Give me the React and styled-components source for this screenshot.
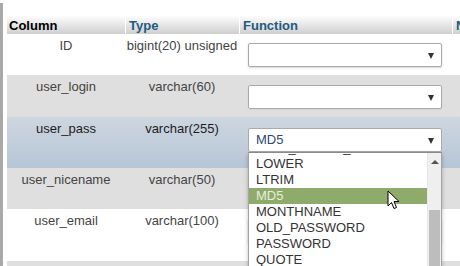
import React from "react";
import styled, { createGlobalStyle, css } from "styled-components";

/* ── page ─────────────────────────────────────────────────────────────────── */

const GlobalStyle = createGlobalStyle`
  html, body {
    margin: 0;
    padding: 0;
    background: #fff;
    font-family: "Liberation Sans", Arial, sans-serif;
    font-size: 13px;
    color: #444;
    overflow: hidden;
  }
`;

const Page = styled.div`
  position: relative;
  display: flex;
  width: 460px;
  height: 266px;
  overflow: hidden;
`;

const NavEdge = styled.div`
  width: 3px;
  flex: none;
  background: #a9a9a9;
  margin-top: 3px;
`;

const Content = styled.div`
  flex: 1;
  display: flex;
  flex-direction: column;
  padding-left: 4px;
  min-width: 0;
`;

const TopStrip = styled.div`
  display: flex;
  height: 3px;
  margin-left: -7px;
  background: #f1f1f1;
`;

const StripPart = styled.div`
  width: ${({ w }) => w}px;
  flex: none;
  border-right: 1px solid #c9c9c9;
`;

/* ── table ────────────────────────────────────────────────────────────────── */

const Table = styled.div`
  margin-top: 16px;
  display: flex;
  flex-direction: column;
`;

const grid = css`
  display: grid;
  grid-template-columns: 118px 114px 213px 1fr;
`;

const HeadRow = styled.div`
  ${grid};
  height: 18px;
  background: linear-gradient(#fdfdfd, #cfcfcf);
`;

const HeadCell = styled.div`
  padding-left: ${({ first }) => (first ? 2 : 3)}px;
  border-left: ${({ first }) => (first ? "none" : "1px solid #fff")};
  font-weight: bold;
  line-height: 19px;
  white-space: nowrap;
  overflow: hidden;
  color: ${({ link }) => (link ? "#235a81" : "#000")};
`;

const rowBg = {
  odd: "#fff",
  even: "#dfdfdf",
  hover: "linear-gradient(#ced6df, #b6c6d7)",
};

const Row = styled.div`
  ${grid};
  height: ${({ h }) => h}px;
  background: ${({ kind }) => rowBg[kind]};
  color: ${({ kind }) => (kind === "hover" ? "#1c1c1c" : "#444")};
`;

const Cell = styled.div`
  text-align: center;
  padding-top: 4px;
  line-height: 15px;
  white-space: nowrap;
`;

const FuncCell = styled.div`
  position: relative;
  padding: ${({ top }) => top}px 10px 0 9px;
`;

const SelectBox = styled.div`
  position: relative;
  height: 22px;
  border: 1px solid #aaa;
  border-radius: 2px;
  background: #fff;
  box-shadow: 0 1px 2px #d4d4d4;
  padding-left: 7px;
  line-height: 22px;
  color: #2e4a73;

  &::after {
    content: "";
    position: absolute;
    right: 7px;
    top: 9px;
    border-left: 3.5px solid transparent;
    border-right: 3.5px solid transparent;
    border-top: 6px solid #333;
  }
`;

/* ── open dropdown list ───────────────────────────────────────────────────── */

const ListPopup = styled.div`
  position: absolute;
  z-index: 5;
  top: 23px;
  left: -1px;
  width: 192px;
  height: 130px;
  border: 1px solid #a3a3a3;
  border-top-color: #8a8a8a;
  background: #fff;
  box-shadow: 0 2px 4px rgba(0, 0, 0, 0.25);
  display: flex;
  overflow: hidden;
`;

const Options = styled.div`
  flex: 1;
  overflow: hidden;
`;

const OptionsInner = styled.div`
  margin-top: -13px;
`;

const Option = styled.div`
  height: 16px;
  line-height: 16px;
  padding-left: 7px;
  color: #333;
  white-space: nowrap;
  ${({ active }) =>
    active &&
    css`
      background: #8fab6b;
      color: #e6eedc;
    `}
`;

const Scrollbar = styled.div`
  width: 13px;
  flex: none;
  display: flex;
  flex-direction: column;
  background: #efefef;
  border-left: 1px solid #e6e6e6;
`;

const ScrollArrow = styled.div`
  height: 12px;
  margin-top: 3px;
  display: flex;
  justify-content: center;
  align-items: center;

  &::before {
    content: "";
    border-left: 4px solid transparent;
    border-right: 4px solid transparent;
    border-bottom: 4px solid #555;
  }
`;

const Thumb = styled.div`
  margin: 42px 1px 0 1px;
  flex: 1;
  background: #bdbdbd;
`;

const Cursor = styled.svg`
  position: absolute;
  z-index: 10;
  left: 387px;
  top: 190px;
`;

const stripParts = [93, 33, 138, 89, 78];

const options = [
  "LAST_INSERT_ID",
  "LOWER",
  "LTRIM",
  "MD5",
  "MONTHNAME",
  "OLD_PASSWORD",
  "PASSWORD",
  "QUOTE",
  "RAND",
];

const rows = [
  { name: "ID", type: "bigint(20) unsigned", kind: "odd", h: 41, top: 9 },
  { name: "user_login", type: "varchar(60)", kind: "even", h: 42, top: 10 },
  { name: "user_pass", type: "varchar(255)", kind: "hover", h: 51, top: 11, value: "MD5", open: true },
  { name: "user_nicename", type: "varchar(50)", kind: "even", h: 41, top: 10 },
  { name: "user_email", type: "varchar(100)", kind: "odd", h: 52, top: 10 },
  { name: "user_url", type: "varchar(100)", kind: "even", h: 41, top: 10 },
];

export default function App() {
  return (
    <>
      <GlobalStyle />
      <Page>
        <NavEdge />
        <Content>
          <TopStrip>
            {stripParts.map((w, i) => (
              <StripPart key={i} w={w} />
            ))}
          </TopStrip>
          <Table>
            <HeadRow>
              <HeadCell first>Column</HeadCell>
              <HeadCell link>Type</HeadCell>
              <HeadCell link>Function</HeadCell>
              <HeadCell link>Null</HeadCell>
            </HeadRow>
            {rows.map((r) => (
              <Row key={r.name} kind={r.kind} h={r.h}>
                <Cell>{r.name}</Cell>
                <Cell>{r.type}</Cell>
                <FuncCell top={r.top}>
                  <SelectBox>
                    {r.value}
                    {r.open && (
                      <ListPopup>
                        <Options>
                          <OptionsInner>
                            {options.map((o) => (
                              <Option key={o} active={o === r.value}>
                                {o}
                              </Option>
                            ))}
                          </OptionsInner>
                        </Options>
                        <Scrollbar>
                          <ScrollArrow />
                          <Thumb />
                        </Scrollbar>
                      </ListPopup>
                    )}
                  </SelectBox>
                </FuncCell>
                <div />
              </Row>
            ))}
          </Table>
        </Content>
        <Cursor width="13" height="20" viewBox="0 0 13 20">
          <path
            d="M1 1 L1 16 L4.5 12.5 L7 18.5 L9.5 17.5 L7 11.5 L12 11.5 Z"
            fill="#fff"
            stroke="#000"
            strokeWidth="1"
            strokeLinejoin="round"
          />
        </Cursor>
      </Page>
    </>
  );
}
